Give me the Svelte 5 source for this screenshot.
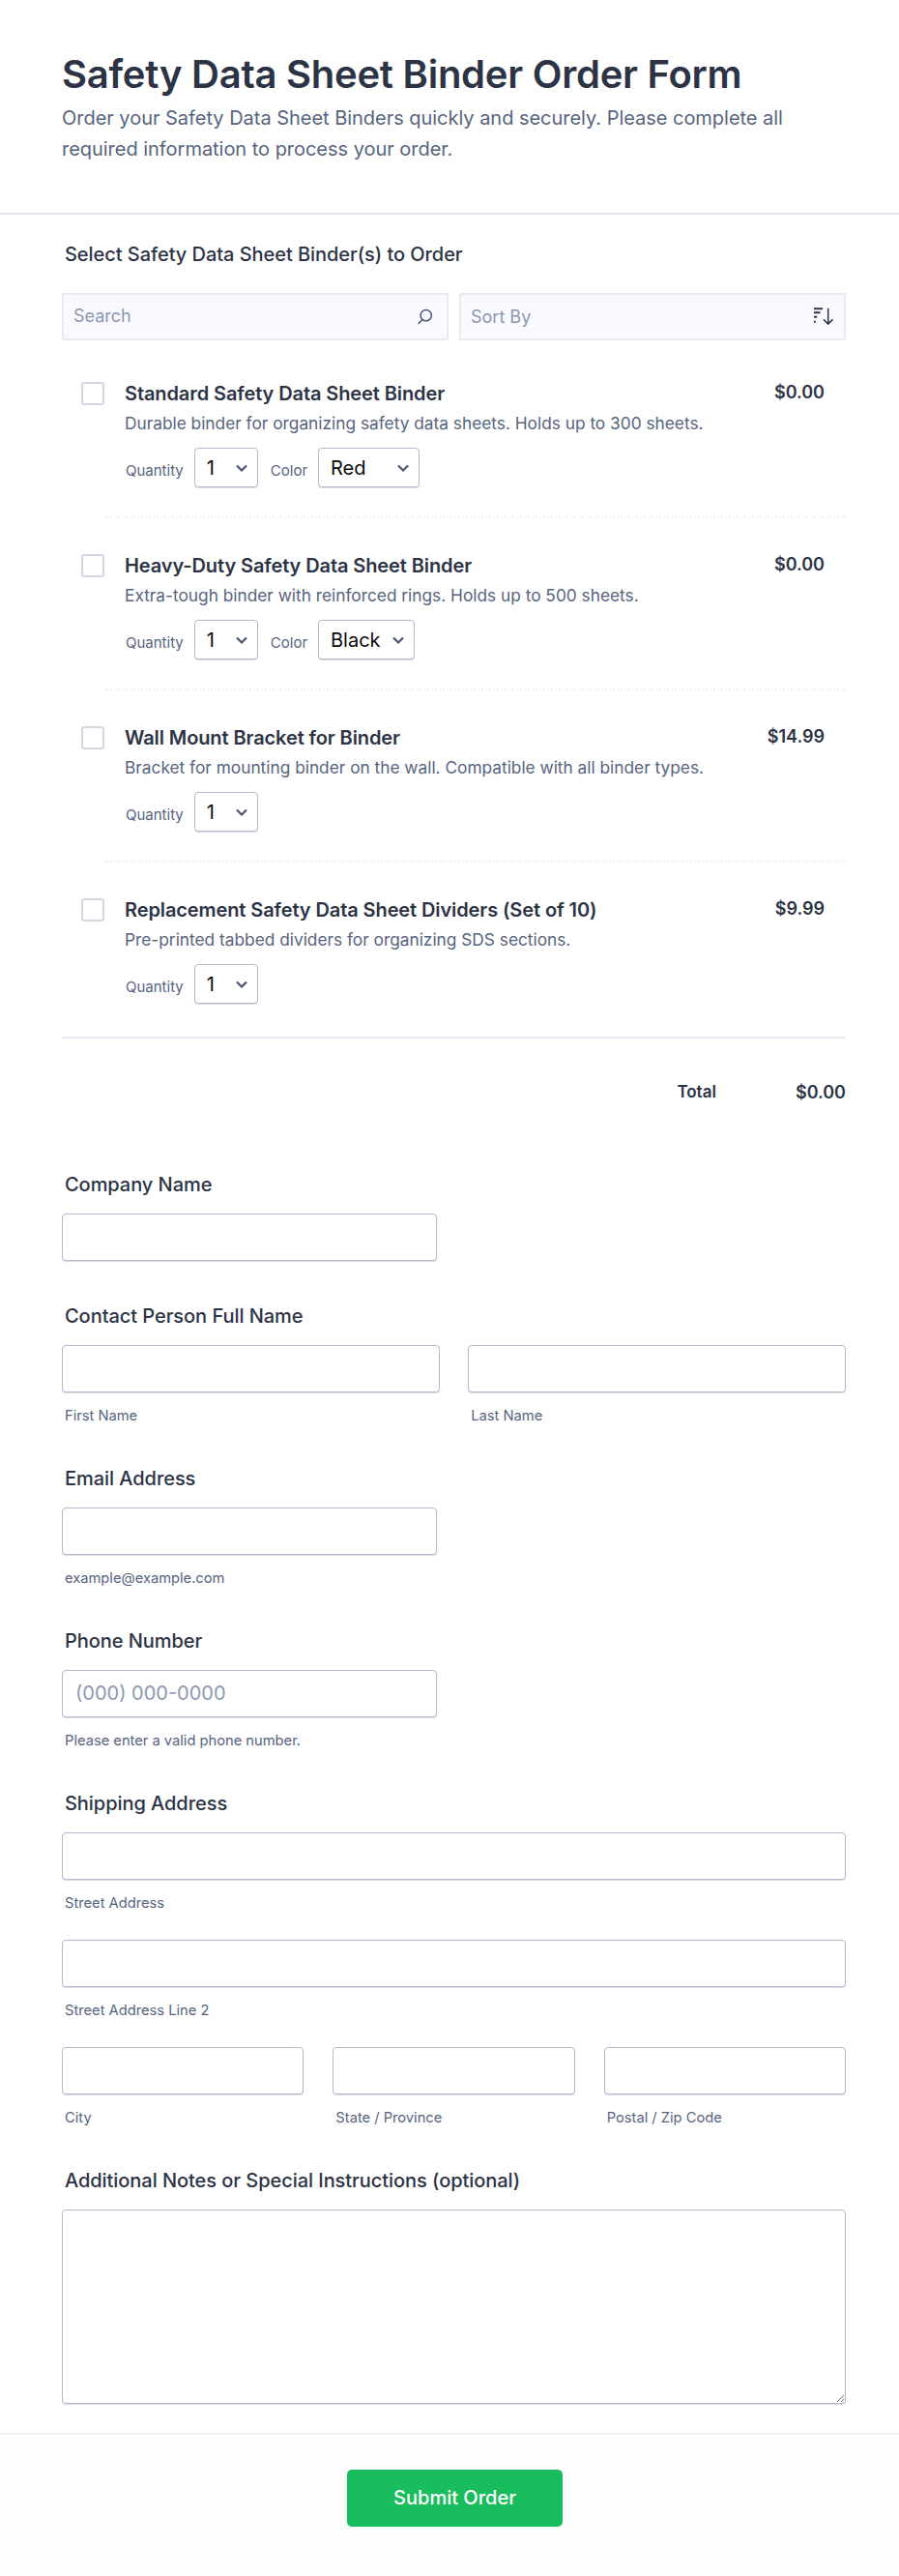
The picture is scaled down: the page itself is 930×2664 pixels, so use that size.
<script>
  const items = [
    { name: 'Standard Safety Data Sheet Binder', desc: 'Durable binder for organizing safety data sheets. Holds up to 300 sheets.', price: '$0.00', color: 'Red', cw: 'wide' },
    { name: 'Heavy-Duty Safety Data Sheet Binder', desc: 'Extra-tough binder with reinforced rings. Holds up to 500 sheets.', price: '$0.00', color: 'Black', cw: 'narrow' },
    { name: 'Wall Mount Bracket for Binder', desc: 'Bracket for mounting binder on the wall. Compatible with all binder types.', price: '$14.99' },
    { name: 'Replacement Safety Data Sheet Dividers (Set of 10)', desc: 'Pre-printed tabbed dividers for organizing SDS sections.', price: '$9.99' }
  ];
</script>

<div class="page">
  <header class="head">
    <h1>Safety Data Sheet Binder Order Form</h1>
    <p>Order your Safety Data Sheet Binders quickly and securely. Please complete all required information to process your order.</p>
  </header>

  <main class="form">
    <section class="products">
      <div class="label sel">Select Safety Data Sheet Binder(s) to Order</div>
      <div class="tools">
        <div class="tool">
          <input class="search" type="text" placeholder="Search" />
          <svg class="ticon" viewBox="0 0 18 18" width="18" height="18" fill="none" stroke="#4a5572" stroke-width="1.5"><circle cx="9.7" cy="8.2" r="5.6"/><path d="M6 12.5 2.2 16.6" stroke-linecap="round"/></svg>
        </div>
        <div class="tool">
          <div class="sort">Sort By</div>
          <svg class="ticon sorticon" viewBox="0 0 22 20" width="22" height="20" fill="none" stroke="#2c3345" stroke-width="1.9"><path d="M1 2.3h9M1 6.3h6.5M1 10.7h3.2M1 15.7h1.8"/><path d="M15.7 1.7v16.4M10.9 13.2l4.8 4.9 4.8-4.9" stroke-width="1.5"/></svg>
        </div>
      </div>

      <div class="list">
        {#each items as it}
          <div class="item">
            <span class="check"></span>
            <div class="body">
              <div class="top">
                <div class="name">{it.name}</div>
                <div class="price">{it.price}</div>
              </div>
              <div class="desc">{it.desc}</div>
              <div class="opts">
                <span class="olabel">Quantity</span>
                <select class="qty"><option>1</option></select>
                {#if it.color}
                  <span class="olabel color">Color</span>
                  <select class="clr {it.cw}"><option>{it.color}</option></select>
                {/if}
              </div>
            </div>
          </div>
        {/each}
      </div>

      <div class="total">
        <span class="tlabel">Total</span>
        <span class="tval">$0.00</span>
      </div>
    </section>

    <section class="field first">
      <div class="label">Company Name</div>
      <input class="half" type="text" />
    </section>

    <section class="field">
      <div class="label">Contact Person Full Name</div>
      <div class="two">
        <div><input type="text" /><div class="sub">First Name</div></div>
        <div><input type="text" /><div class="sub">Last Name</div></div>
      </div>
    </section>

    <section class="field">
      <div class="label">Email Address</div>
      <input class="half" type="text" />
      <div class="sub">example@example.com</div>
    </section>

    <section class="field">
      <div class="label">Phone Number</div>
      <input class="half" type="text" placeholder="(000) 000-0000" />
      <div class="sub">Please enter a valid phone number.</div>
    </section>

    <section class="field">
      <div class="label">Shipping Address</div>
      <input type="text" />
      <div class="sub">Street Address</div>
      <input class="next" type="text" />
      <div class="sub">Street Address Line 2</div>
      <div class="three">
        <div><input type="text" /><div class="sub">City</div></div>
        <div><input type="text" /><div class="sub">State / Province</div></div>
        <div><input type="text" /><div class="sub">Postal / Zip Code</div></div>
      </div>
    </section>

    <section class="field">
      <div class="label">Additional Notes or Special Instructions (optional)</div>
      <textarea></textarea>
    </section>
  </main>

  <footer class="foot">
    <button type="button">Submit Order</button>
  </footer>
</div>

<style>
  :global(body) { margin: 0; background: #fff; }
  .page { width: 930px; font-family: Inter, "Liberation Sans", sans-serif; color: #2c3345; }
  .head { box-sizing: border-box; height: 222px; padding: 52px 64px 0; border-bottom: 2px solid #e3e5ee; }
  h1 { margin: 0; font-size: 40px; line-height: 50px; font-weight: 600; letter-spacing: -0.25px; color: #2c3345; }
  .head p { margin: 4px 0 0; font-size: 20px; line-height: 32px; letter-spacing: -0.03px; color: #57647e; }
  .form { padding: 0 55px 0 64px; }
  .label { font-size: 20px; line-height: 24px; font-weight: 450; letter-spacing: -0.05px; color: #2c3345; padding-left: 3px; }
  .sel { margin-top: 29px; }
  .tools { display: flex; gap: 11px; margin-top: 28px; }
  .tool { position: relative; flex: 1; height: 49px; }
  .search, .sort { box-sizing: border-box; display: block; width: 100%; height: 49px; background: #f9f9ff; border: 2px solid #e9ebf3; padding: 0 10px; font: 18px Inter, sans-serif; color: #8c98b0; border-radius: 0; box-shadow: none; }
  .search { padding-bottom: 2px; }
  .sort { line-height: 46px; }
  .search::placeholder { color: #8c98b0; opacity: 1; }
  .ticon { position: absolute; right: 15px; top: 15px; }
  .sorticon { right: 12px; top: 14px; }
  .list { margin-top: 6px; }
  .item { box-sizing: border-box; display: flex; height: 178px; padding-top: 36px; margin-left: 43px; border-bottom: 2px dotted #f0f1f6; }
  .item:last-child { height: 180px; border-bottom: 0; }
  .check { box-sizing: border-box; flex: none; width: 24px; height: 24px; margin: 1px 21px 0 -23px; border: 2px solid #d3d7e4; border-radius: 3px; background: #fff; }
  .body { flex: 1; }
  .top { display: flex; justify-content: space-between; padding-right: 22px; }
  .name { font-size: 20px; line-height: 26px; font-weight: 600; letter-spacing: -0.1px; color: #2c3345; }
  .price { font-size: 18px; line-height: 24px; font-weight: 600; }
  .desc { font-size: 17.3px; line-height: 24px; color: #57647e; margin-top: 6px; }
  .opts { display: flex; align-items: center; margin-top: 13px; }
  .olabel { font-size: 15px; color: #57647e; margin-left: 1px; margin-right: 11px; padding-top: 5px; }
  .olabel.color { margin-left: 13px; margin-right: 11px; }
  select { box-sizing: border-box; appearance: none; height: 41px; border: 1px solid #b4bace; box-shadow: 0 1px 0 #d9dce7; border-radius: 4px; background-color: #fff; background-repeat: no-repeat; background-position: right 9px center; background-size: 14px 14px; background-image: url("data:image/svg+xml,%3Csvg xmlns='http://www.w3.org/2000/svg' viewBox='0 0 14 14' fill='none' stroke='%234a5572' stroke-width='2.2'%3E%3Cpath d='M2 4.5l5 5 5-5'/%3E%3C/svg%3E"); font: 20px Inter, sans-serif; color: #0a0a0a; padding: 0 12px; }
  .qty { width: 66px; }
  .clr.wide { width: 105px; }
  .clr.narrow { width: 100px; }
  .total { box-sizing: border-box; border-top: 2px solid #e9ebf3; display: flex; justify-content: flex-end; align-items: center; height: 112px; font-size: 18px; font-weight: 600; }
  .tlabel { margin-right: 82px; font-size: 17px; }
  .field { margin-top: 45.5px; }
  .field.first { margin-top: 29px; }
  .field > input, .two input { margin-top: 17.5px; }
  .field > input.next { margin-top: 30px; }
  input { box-sizing: border-box; display: block; width: 100%; height: 49px; border: 1px solid #b4bace; box-shadow: 0 1px 0 #d9dce7; border-radius: 4px; background: #fff; font: 20px Inter, sans-serif; padding: 0 13px; }
  input::placeholder { color: #8c98b0; opacity: 1; }
  .half { width: 388px; }
  .two { display: grid; grid-template-columns: 1fr 1fr; gap: 29.5px; }
  .three { display: grid; grid-template-columns: repeat(3, 1fr); gap: 30px; margin-top: 30px; }
  .sub { font-size: 14.7px; line-height: 18px; color: #57647e; margin: 15px 0 -1px; padding-left: 3px; }
  textarea { box-sizing: border-box; display: block; width: 100%; height: 201px; border: 1px solid #b4bace; box-shadow: 0 1px 0 #d9dce7; border-radius: 4px; margin-top: 17.5px; background: #fff; }
  .foot { box-sizing: border-box; height: 147px; margin-top: 30px; border-top: 2px solid #eff0f5; background: #fefefe; padding: 36px 0 0 11px; display: flex; justify-content: center; align-items: flex-start; }
  button { width: 223px; height: 59px; background: #1abd5e; border: 0; border-radius: 5px; color: #fff; font: 500 20px Inter, sans-serif; }
</style>
